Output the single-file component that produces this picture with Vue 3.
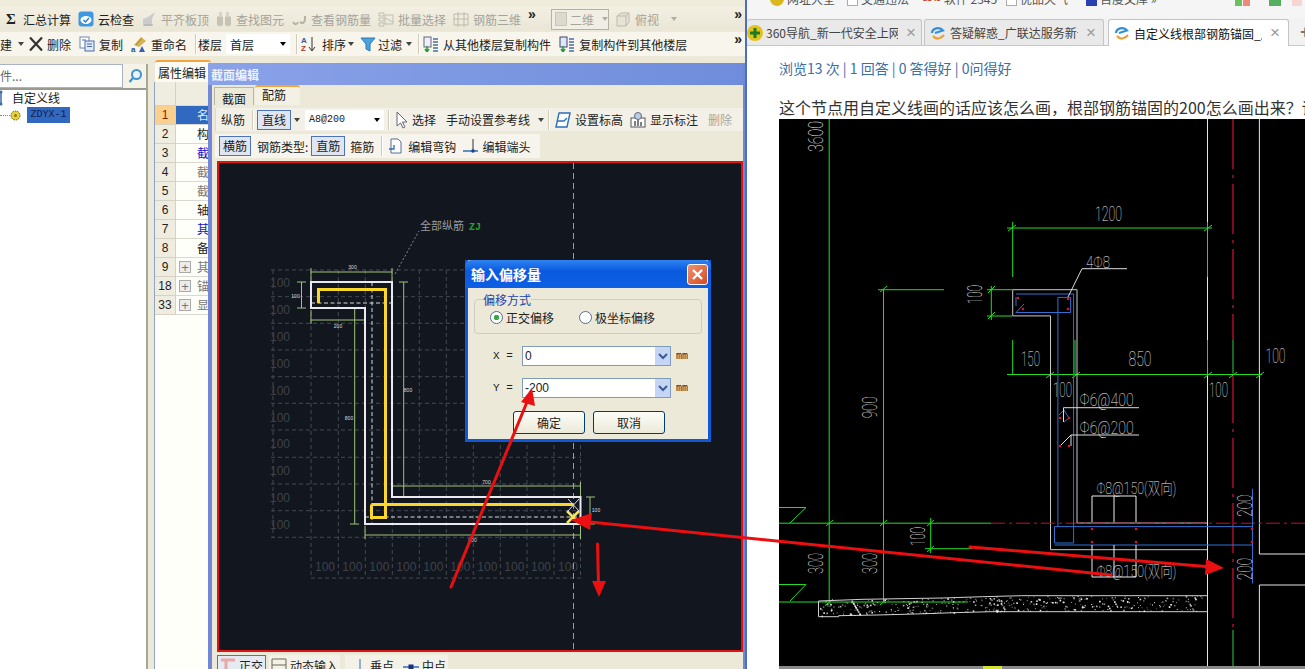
<script setup>
const tableRows = [
  { n: 1, t: '名', cls: 'sel' },
  { n: 2, t: '构', cls: '' },
  { n: 3, t: '截', cls: 'link' },
  { n: 4, t: '截', cls: 'dim' },
  { n: 5, t: '截', cls: 'dim' },
  { n: 6, t: '轴', cls: '' },
  { n: 7, t: '其', cls: 'link' },
  { n: 8, t: '备', cls: '' },
  { n: 9, t: '其', cls: 'dim', plus: true },
  { n: 18, t: '锚', cls: 'dim', plus: true },
  { n: 33, t: '显', cls: 'dim', plus: true }
]

// section canvas grid
const gridX = [310, 337.3, 364.3, 391.3, 418.3, 445.3, 472.3, 499.3, 526, 553, 579.5]
const gridY = [270, 296.7, 323.3, 350, 376.7, 403.3, 430, 457.3, 484, 510.7, 537.3]
const sideLabels = [287, 314, 341, 368, 395, 422, 448, 475, 502, 529]
const bottomLabels = gridX.slice(0, 10)

const dims = [
  { d: 'M310 272H391M310 268V284M391 268V284', },
  { d: 'M300.5 282V308M296 282H305M296 308H305' },
  { d: 'M310 320H364M310 310V324M364 308V324' },
  { d: 'M353.7 308V524M349 308H358M349 524H358' },
  { d: 'M402.7 282V497M398 282H407M398 497H407' },
  { d: 'M391 486H579.5M391 482V497M579.5 482V497' },
  { d: 'M589 497V524M585 497H594M585 524H594' },
  { d: 'M364 535H579.5M364 526V539M579.5 526V539' }
]
const dimLabels = [
  { x: 351.5, y: 268.5, t: '300' },
  { x: 294.5, y: 298, t: '100' },
  { x: 337, y: 327.5, t: '200' },
  { x: 407, y: 392, t: '800' },
  { x: 348, y: 419.5, t: '800' },
  { x: 485.5, y: 483.5, t: '700' },
  { x: 595, y: 512, t: '100' },
  { x: 471.5, y: 542, t: '800' }
]

// notes on the right hand drawing, x / y is the text baseline start
const notes = [
  { x: 1095, y: 220.5, t: '1200', len: 27 },
  { x: 1086, y: 268, t: '4Φ8', len: 24, fs: 17 },
  { x: 1021, y: 366, t: '150', len: 19 },
  { x: 1128.5, y: 366, t: '850', len: 23 },
  { x: 1265.5, y: 363, t: '100', len: 20 },
  { x: 1053, y: 397, t: '100', len: 19 },
  { x: 1209, y: 397, t: '100', len: 19 },
  { x: 1079.6, y: 406, t: 'Φ6@400', len: 54, fs: 18 },
  { x: 1079.6, y: 434, t: 'Φ6@200', len: 54, fs: 18 },
  { x: 1096.4, y: 494, t: 'Φ8@150(双向)', len: 80, fs: 16 },
  { x: 1096.4, y: 577, t: 'Φ8@150(双向)', len: 80, fs: 16 },
  { x: 982, y: 304, t: '100', len: 19, rot: true },
  { x: 823, y: 152, t: '3600', len: 31, rot: true },
  { x: 877, y: 418.3, t: '900', len: 22, rot: true },
  { x: 823, y: 574, t: '300', len: 21, rot: true },
  { x: 877, y: 574, t: '300', len: 21, rot: true },
  { x: 925.3, y: 546, t: '100', len: 19, rot: true },
  { x: 1252, y: 516.7, t: '200', len: 22, rot: true },
  { x: 1252, y: 580, t: '200', len: 22, rot: true }
]

const rebarDots = [
  [1018, 298], [1023, 309], [1068, 299], [1068, 309], [1060, 418], [1069, 418],
  [1060, 446], [1069, 446], [1092, 529], [1136, 529], [1092, 542], [1136, 542],
  [1252, 529], [1252, 542]
]

// speckle of the concrete strip, fixed seed so it stays the same
const speckle = []
let seed = 7
for (let i = 0; i < 420; i++) {
  seed = (seed * 9301 + 49297) % 233280
  const x = 820 + (seed / 233280) * 385
  seed = (seed * 9301 + 49297) % 233280
  const top = x < 1020 ? 601 - (x - 820) * 0.025 : 596
  const y = top + (seed / 233280) * 15
  speckle.push({ x: x.toFixed(1), y: y.toFixed(1), o: 0.4 + (i % 5) * 0.14, s: i % 3 === 0 ? 1.6 : 1 })
}
</script>

<template>
  <div class="screen">
    <div class="cad-app">
      <div class="top-gap"></div>

      <div class="toolbar row-one">
        <span class="tool"><span class="ico sigma">Σ</span>汇总计算</span>
        <span class="tool">
          <svg class="ico" viewBox="0 0 16 16"><rect x="0.5" y="0.5" width="15" height="15" rx="3" fill="#3f97dd"/><ellipse cx="8" cy="9" rx="5.5" ry="4" fill="#fff"/><path d="M5.5 9l2 2 3.5-4" fill="none" stroke="#2f7fc8" stroke-width="1.5"/></svg>云检查
        </span>
        <span class="tool off">
          <svg class="ico" viewBox="0 0 16 16"><path d="M2 15V8l5-2 7-5-3 7v7z" fill="#ccc"/><path d="M3 14h9" stroke="#aaa"/></svg>平齐板顶
        </span>
        <span class="tool off">
          <svg class="ico" viewBox="0 0 16 16"><rect x="1" y="5" width="6" height="10" rx="2" fill="#c6c3b4"/><rect x="9" y="5" width="6" height="10" rx="2" fill="#c6c3b4"/><rect x="3" y="1" width="3" height="5" fill="#d8d5c8"/><rect x="10" y="1" width="3" height="5" fill="#d8d5c8"/></svg>查找图元
        </span>
        <span class="tool off">
          <svg class="ico" viewBox="0 0 16 16"><path d="M2 11c2 3 4 3 5 0M9 11c2 2 5 1 5-3V5" fill="none" stroke="#b5b2a4" stroke-width="2"/></svg>查看钢筋量
        </span>
        <span class="tool off">
          <svg class="ico" viewBox="0 0 16 16"><path d="M1 2h5v3H1zM1 7h5v3H1zM1 12h5v3H1zM7 4h8v9H7z" fill="none" stroke="#c2bfb0"/><path d="M7 7l8 4" stroke="#c2bfb0"/></svg>批量选择
        </span>
        <span class="tool off">
          <svg class="ico" viewBox="0 0 16 16"><path d="M1 3h14v11H1zM5 1v15M11 1v15M1 8h14" fill="none" stroke="#bdbaab"/></svg>钢筋三维
        </span>
        <span class="more">»</span>
        <span class="view-box"><span class="view-swatch"></span>二维<span class="caret off-caret"></span></span>
        <span class="tool off view-tool">
          <svg class="ico" viewBox="0 0 16 16"><path d="M2 5l4-3h8v9l-3 4H2zM2 5h9v10M11 5l3-3" fill="#e6e3d6" stroke="#bdbaab"/></svg>俯视<span class="caret off-caret"></span>
        </span>
        <span class="more end">»</span>
      </div>

      <div class="toolbar row-two">
        <span class="tool cut">建<span class="caret"></span></span>
        <span class="tool delete">
          <svg class="ico" viewBox="0 0 16 16"><path d="M2 1.5l12 13M14 1.5l-12 13" stroke="#333" stroke-width="2.2"/></svg>删除
        </span>
        <span class="tool">
          <svg class="ico" viewBox="0 0 16 16"><rect x="1" y="1" width="9" height="11" fill="#fff" stroke="#6d89b5"/><rect x="6" y="5" width="9" height="10" fill="#dfe9f7" stroke="#4a6fa8"/><path d="M8 8h5M8 10.500h5M3 4h4" stroke="#4a6fa8"/></svg>复制
        </span>
        <span class="tool">
          <svg class="ico" viewBox="0 0 16 16"><path d="M3 9l7-8 5 4-7 6z" fill="#d8b24a"/><path d="M5 9l6-7" stroke="#8e8a60"/><text x="0" y="16" class="az">a</text><path d="M8 16l3-6 3 6z" fill="#3a5fb0"/></svg>重命名
        </span>
        <span class="sep"></span>
        <span class="plain floor">楼层</span>
        <span class="combo floor-combo">首层<span class="caret dark"></span></span>
        <span class="sep pull"></span>
        <span class="tool sort">
          <svg class="ico" viewBox="0 0 16 16"><text x="1" y="7" class="az blue">A</text><text x="1" y="15" class="az red">Z</text><path d="M12 1v13M9 11l3 4 3-4" fill="none" stroke="#333"/></svg>排序<span class="caret"></span>
        </span>
        <span class="tool filter">
          <svg class="ico" viewBox="0 0 16 16"><path d="M1 2h14l-5 6v7l-4-2V8z" fill="#4aa3df" stroke="#2c78b4"/></svg>过滤<span class="caret"></span>
        </span>
        <span class="sep pull"></span>
        <span class="tool from-floor">
          <svg class="ico" viewBox="0 0 16 16"><rect x="1" y="1" width="7" height="10" fill="#eef" stroke="#667"/><path d="M10 3h5M10 6h5M10 9h5M10 12h5M10 15h5" stroke="#4a6fa8" stroke-width="1.400"/><path d="M4 10v6M2 13l2 3 2-3" stroke="#2a9a3c" fill="none" stroke-width="1.500"/></svg>从其他楼层复制构件
        </span>
        <span class="tool">
          <svg class="ico" viewBox="0 0 16 16"><rect x="1" y="1" width="7" height="10" fill="#dfe6ff" stroke="#446"/><path d="M10 3h5M10 6h5M10 9h5M10 12h5M10 15h5" stroke="#4a6fa8" stroke-width="1.400"/><path d="M4 10v6M2 13l2 3 2-3" stroke="#2a9a3c" fill="none" stroke-width="1.500"/></svg>复制构件到其他楼层
        </span>
        <span class="more end">»</span>
      </div>

      <div class="work">
        <aside class="sidebar">
          <div class="search">
            <span class="search-input">构件...</span>
            <span class="search-btn">
              <svg width="16" height="16" viewBox="0 0 16 16"><circle cx="9.500" cy="6.500" r="4.500" fill="#e8f3fb" stroke="#3f93d3" stroke-width="2"/><path d="M6 10l-3.500 4" stroke="#3f93d3" stroke-width="2.200"/></svg>
            </span>
          </div>
          <div class="tree">
            <div class="tree-node">
              <svg width="5" height="16" viewBox="0 0 5 16"><path d="M1 1v14" stroke="#3a6da8" stroke-width="1.500"/><circle cx="1" cy="2" r="1.500" fill="#3a6da8"/><circle cx="1" cy="14" r="1.500" fill="#3a6da8"/></svg>
              <span class="node-label">自定义线</span>
            </div>
            <div class="tree-node leaf">
              <span class="tree-dots"></span>
              <svg width="11" height="11" viewBox="0 0 11 11"><circle cx="5.500" cy="5.500" r="4.500" fill="#e8d23a" stroke="#5a5a10" stroke-dasharray="1.500 1"/><circle cx="5.500" cy="5.500" r="1.500" fill="#8a7d10"/></svg>
              <span class="leaf-label">ZDYX-1</span>
            </div>
          </div>
        </aside>
        <section class="props">
          <div class="props-tab">属性编辑</div>
          <div class="props-table">
            <div class="props-head"><span class="num-cell"></span><span class="name-cell"></span></div>
            <div v-for="row in tableRows" :key="row.n" class="props-row">
              <span class="num-cell" :class="{ active: row.n === 1 }">{{ row.n }}</span>
              <span class="name-cell" :class="row.cls">
                <span v-if="row.plus" class="plus">+</span>
                <span class="name-text">{{ row.t }}</span>
              </span>
            </div>
          </div>
        </section>
      </div>

      <!-- floating section editor -->
      <div class="section-window">
        <div class="title-bar">截面编辑</div>
        <div class="window-body">
          <div class="tabs">
            <span class="tab">截面</span>
            <span class="tab on">配筋</span>
          </div>
          <div class="edit-bar bar-top">
            <span class="t-label w24">纵筋</span>
            <span class="sep s8"></span>
            <span class="pressed line-btn">直线</span>
            <span class="caret c5"></span>
            <span class="combo bar-combo">A8@200<span class="caret dark"></span></span>
            <span class="sep"></span>
            <svg class="cursor" width="12" height="18" viewBox="0 0 12 18"><path d="M1 1v14l3.500-3 2.500 5 2-1-2.500-5H11z" fill="#fff" stroke="#667"/></svg>
            <span class="t-label ml4">选择</span>
            <span class="t-label ml10">手动设置参考线</span>
            <span class="caret c11"></span>
            <span class="sep"></span>
            <svg class="ico ml6" viewBox="0 0 16 16"><path d="M4 1h11l-3 14H1z" fill="#fff" stroke="#2a6fb8" stroke-width="1.400"/><path d="M3 9h6l3-3" fill="none" stroke="#2a6fb8" stroke-width="1.400"/></svg>
            <span class="t-label ml4">设置标高</span>
            <svg class="ico ml7" viewBox="0 0 16 16"><rect x="1" y="6" width="14" height="9" fill="#fff" stroke="#555"/><circle cx="8" cy="4" r="3.500" fill="#b8cfe8" stroke="#667"/><path d="M5 14V9M8 14V8M11 14v-4" stroke="#555" stroke-width="1.500"/></svg>
            <span class="t-label ml4">显示标注</span>
            <span class="t-label off-text ml10">删除</span>
          </div>
          <div class="edit-bar bar-second">
            <span class="pressed cross-btn">横筋</span>
            <span class="t-label ml6">钢筋类型:</span>
            <span class="pressed straight-btn">直筋</span>
            <span class="t-label ml5">箍筋</span>
            <span class="sep s7"></span>
            <svg class="ico ml6" viewBox="0 0 16 16"><path d="M3 1h7l3 3v11H3z" fill="#fff" stroke="#55708f"/><path d="M1 11h5V7" fill="none" stroke="#2a6fb8" stroke-width="1.300"/></svg>
            <span class="t-label ml4">编辑弯钩</span>
            <svg class="ico ml6" viewBox="0 0 16 16"><path d="M1 13h15" stroke="#2a6fb8" stroke-width="1.500"/><path d="M11 1v12" stroke="#333"/><circle cx="11" cy="13" r="1.800" fill="#1f3f90"/></svg>
            <span class="t-label ml4">编辑端头</span>
          </div>
          <div class="section-canvas">
            <svg class="canvas-svg" viewBox="218 163 522 487" width="522" height="487">
              <g stroke="#45494f" stroke-width="1" stroke-dasharray="4 3" fill="none">
                <path v-for="x in gridX" :key="'gx' + x" :d="`M${x} 270V578`"/>
                <path v-for="y in gridY" :key="'gy' + y" :d="`M270 ${y}H580`"/>
                <path d="M310 578H580M272 270V538"/>
              </g>
              <g class="grid-text">
                <text v-for="y in sideLabels" :key="'sl' + y" x="269" :y="y">100</text>
                <text v-for="x in bottomLabels" :key="'bl' + x" :x="x + 4" y="571">100</text>
              </g>
              <path d="M572.500 163V650" stroke="#9a9c9c" stroke-dasharray="6 4" fill="none"/>

              <path d="M394 274L418 231" stroke="#888a8a" stroke-dasharray="2 2" fill="none"/>
              <text x="419" y="230" class="small-note">全部纵筋</text>
              <text x="468" y="230" class="zj">ZJ</text>

              <g stroke="#9fc27a" stroke-width="1" fill="none">
                <path v-for="(dim, i) in dims" :key="i" :d="dim.d"/>
              </g>
              <text v-for="l in dimLabels" :key="l.x + l.t" :x="l.x" :y="l.y" class="tiny">{{ l.t }}</text>

              <g stroke="#d8d8d8" stroke-dasharray="4 2.500" fill="none">
                <path d="M310 303H391M371 282V524M364 517H579"/>
              </g>
              <path d="M310 282H391V497H579.500V524H364V308H310Z" fill="none" stroke="#eaeaf0" stroke-width="2"/>
              <path d="M317.500 303V289.500H384.500V504.500H572M370.500 504.500H384.500" fill="none" stroke="#fbd62c" stroke-width="3"/>
              <path d="M370.500 504.500V517.500H384.500V504.500" fill="none" stroke="#fbd62c" stroke-width="3"/>
              <path d="M566 511L578 523M578 511L566 523" stroke="#f5e463" stroke-width="2.500"/>
              <path d="M567 499L578 511M578 499L567 511" stroke="#dddddd" stroke-width="1"/>
            </svg>
          </div>
          <div class="status-bar">
            <span class="status-btn ortho">
              <svg class="ico" viewBox="0 0 16 16"><path d="M1 2h14M6 2v13" stroke="#e8a8a8" stroke-width="3"/></svg>正交
            </span>
            <span class="status-btn">
              <svg class="ico" viewBox="0 0 16 16"><path d="M1 1h14v14H1zM1 7h14" fill="none" stroke="#6b6b50"/></svg>动态输入
            </span>
            <span class="status-btn group">
              <svg class="ico" viewBox="0 0 16 16"><path d="M1 15h14" stroke="#2a6fb8" stroke-width="1.500"/><path d="M9 1v14" stroke="#2a6fb8"/></svg>垂点
              <svg class="ico ml6" viewBox="0 0 16 16"><path d="M0 9h16" stroke="#2a6fb8" stroke-width="1.500"/><rect x="5.500" y="6.500" width="5" height="5" fill="#1a2f80"/></svg>中点
            </span>
          </div>
        </div>

        <!-- offset dialog -->
        <div class="offset-dialog">
          <div class="dlg-title">
            <span>输入偏移量</span>
            <span class="dlg-close">
              <svg width="13" height="13" viewBox="0 0 13 13"><path d="M2 2l9 9M11 2l-9 9" stroke="#fff" stroke-width="2.400"/></svg>
            </span>
          </div>
          <div class="dlg-body">
            <fieldset class="dlg-group">
              <legend>偏移方式</legend>
              <label class="radio"><span class="dot on"></span>正交偏移</label>
              <label class="radio"><span class="dot"></span>极坐标偏移</label>
            </fieldset>
            <div class="field">
              <span class="field-name">X =</span>
              <span class="field-input">0<span class="field-drop"><svg width="10" height="7" viewBox="0 0 10 7"><path d="M1 1l4 4 4-4" fill="none" stroke="#3c5a92" stroke-width="2"/></svg></span></span>
              <span class="field-unit">mm</span>
            </div>
            <div class="field">
              <span class="field-name">Y =</span>
              <span class="field-input">-200<span class="field-drop"><svg width="10" height="7" viewBox="0 0 10 7"><path d="M1 1l4 4 4-4" fill="none" stroke="#3c5a92" stroke-width="2"/></svg></span></span>
              <span class="field-unit">mm</span>
            </div>
            <div class="dlg-actions">
              <span class="dlg-btn">确定</span>
              <span class="dlg-btn">取消</span>
            </div>
          </div>
        </div>
      </div>
    </div>

    <div class="browser">
      <div class="bookmarks">
        <span class="mark m-a"><svg width="14" height="14" viewBox="0 0 14 14"><circle cx="7" cy="7" r="7" fill="#d8b81c"/></svg>网址大全</span>
        <span class="mark m-b"><span class="box-ico"></span>交通违法</span>
        <span class="mark m-c"><span class="num-ico">2345</span>软件 2345</span>
        <span class="mark m-d"><span class="box-ico"></span>优品天气</span>
        <span class="mark m-e"><span class="box-ico paw"></span>百度文库 »</span>
        <span class="mark-icons"><i class="g"></i><i class="r"></i><i class="g2"></i><i class="r2"></i></span>
      </div>
      <div class="tab-strip">
        <div class="b-tab t1">
          <svg class="favicon" width="16" height="16" viewBox="0 0 16 16"><circle cx="8" cy="8" r="8" fill="#e3c21b"/><path d="M8 3v10M3 8h10" stroke="#1f7a22" stroke-width="3"/></svg>
          <span class="b-title">360导航_新一代安全上网</span>
          <span class="b-close">×</span>
        </div>
        <div class="b-tab">
          <svg class="favicon" width="18" height="16" viewBox="0 0 16 16"><path d="M2 8a6 5 0 0 1 11-2.500L5 8" fill="none" stroke="#2f8fd8" stroke-width="2.200"/><path d="M3 11c3 4 8 3 11-1" fill="none" stroke="#e8a33a" stroke-width="2.200"/></svg>
          <span class="b-title">答疑解惑_广联达服务新干线</span>
          <span class="b-close">×</span>
        </div>
        <div class="b-tab current">
          <svg class="favicon" width="18" height="16" viewBox="0 0 16 16"><path d="M2 8a6 5 0 0 1 11-2.500L5 8" fill="none" stroke="#2f8fd8" stroke-width="2.200"/><path d="M3 11c3 4 8 3 11-1" fill="none" stroke="#e8a33a" stroke-width="2.200"/></svg>
          <span class="b-title">自定义线根部钢筋锚固_广联达</span>
          <span class="b-close">×</span>
        </div>
        <span class="new-tab">+</span>
      </div>
      <div class="page">
        <p class="stats">浏览13 次 | 1 回答 | 0 答得好 | 0问得好</p>
        <p class="question">这个节点用自定义线画的话应该怎么画，根部钢筋锚固的200怎么画出来？请</p>
        <div class="drawing">
          <svg viewBox="779 119 526 550" width="526" height="550">
            <rect x="779" y="119" width="526" height="550" fill="#000"/>
            <!-- axis and wall lines -->
            <path d="M1207.500 119V666M1259.400 119V554M1259.400 585V666M1259.400 554H1305M1259.400 585H1305" stroke="#e6e6e6" fill="none"/>
            <path d="M1233 119V340M1233 373V630" stroke="#c8102e" stroke-width="1.300" stroke-dasharray="50 6 3 6" fill="none"/>
            <path d="M1233 630V666M1233 340V373" stroke="#1fa32a" stroke-width="1.300" fill="none"/>
            <g stroke="#22dd22" fill="none">
              <path d="M829.200 119V602M883.500 289V602"/>
              <path d="M1007 228H1212M1012.700 222V277M1207.500 222V277M1012.700 340V374M1075 340V374M1207.500 340V374"/>
              <path d="M1007 374.500H1262M878 289.700H944M987 289.700H1012M987 316H1012M991.300 286V320"/>
              <path d="M779 523.200H991M925 548.700H972M930.700 518V553M779 602H968"/>
              <path d="M779 507.500H806L790 523M779 584.500H806L790 601"/>
            </g>
            <g stroke="#22dd22" fill="none">
              <path d="M1008 231l8-6M1204 231l8-6M826 526l7-6M880 526l7-6M927 526l7-6M927 552l7-6M826 605l7-6M880 605l7-6M1046 378l8-6M1072 378l8-6M1204 378l8-6M1229 378l8-6M1256 378l8-6M988 293l7-7M988 319l7-7M880 292l7-6"/>
            </g>
            <path d="M1012.700 315.900V289.700H1077V523H1207M1012.700 315.900H1050.500V549.700H1207" fill="none" stroke="#c8c8c8"/>
            <path d="M991 523.200H1305" stroke="#c8102e" stroke-dasharray="14 4 3 4" fill="none"/>
            <g stroke="#2f70d0" fill="none">
              <path d="M1016 294H1073.600V543H1054.500V526.600H1252M1054.500 545H1252M1057.900 526V297.400H1070.600V312.500H1016M1016 312.500L1024 304M1252.500 488.700V583.500"/>
              <path d="M1016 297V306M1059 415l5-5 5 8-5 4"/>
            </g>
            <path d="M1092 496V522M1114 496V522M1136 496V522M1092 496H1136M1092 545V577M1114 545V577M1136 545V577M1092 577H1136" stroke="#eee" fill="none"/>
            <path d="M1082 268.700H1127M1082 268.700L1068 297M1063.500 407.700H1139M1063.500 407.700V422M1071 435H1139M1071 435L1060 446M1071 435V446" stroke="#ddd" fill="none"/>
            <circle v-for="(p, i) in rebarDots" :key="i" :cx="p[0]" :cy="p[1]" r="1.300" fill="#e01030"/>
            <!-- concrete strip -->
            <path d="M818.500 601L863 599.300L942.400 598L982.600 596.700L1021.700 595.700H1207.500M818.500 601V616.700H838.600V615.700L877 615L915.600 614L954 612.700L991 611.700H1207.500" fill="none" stroke="#d0d0d0"/>
            <rect v-for="(s, i) in speckle" :key="i" :x="s.x" :y="s.y" :width="s.s" :height="s.s" fill="#fff" :opacity="s.o"/>
            <g class="cad-text">
              <text v-for="n in notes" :key="n.t + n.x + n.y"
                :x="n.x" :y="n.y"
                :textLength="n.len" lengthAdjust="spacingAndGlyphs"
                :font-size="n.fs || 20"
                :transform="n.rot ? `rotate(-90 ${n.x} ${n.y})` : null">{{ n.t }}</text>
            </g>
            <path d="M779 667.500H1305" stroke="#8a8a8a" stroke-width="3"/>
            <path d="M983 667.500H1002" stroke="#d8e030" stroke-width="3"/>
          </svg>
        </div>
      </div>
    </div>

    <!-- red markup drawn over the screenshot -->
    <svg class="markup" width="1305" height="669" viewBox="0 0 1305 669">
      <g stroke="#ea0f10" stroke-width="3" fill="#ea0f10" stroke-linecap="round">
        <path d="M1111 575L590 522"/>
        <path d="M970 547L1206 566.500"/>
        <path d="M451 587L527 402"/>
        <path d="M597.500 544L598.500 584"/>
      </g>
      <g fill="#ea0f10">
        <polygon points="571,520 592,513 590,530"/>
        <polygon points="1224,568 1206,559 1205,575"/>
        <polygon points="532,388 521,402 535,406"/>
        <polygon points="599,597 592,581 606,581"/>
      </g>
    </svg>
  </div>
</template>

<style>
html, body { margin: 0; background: #fff; overflow: hidden; }
</style>

<style scoped>
.screen {
  position: relative;
  display: flex;
  width: 1305px;
  height: 669px;
  overflow: hidden;
  font-family: "Noto Sans CJK SC", "Liberation Sans", sans-serif;
  font-size: 12px;
  color: #222;
}

/* left application */
.cad-app {
  position: relative;
  display: flex;
  flex-direction: column;
  flex: none;
  width: 745px;
  background: #ece9d8;
}
.top-gap { height: 7px; background: #efecdc; }
.toolbar {
  display: flex;
  align-items: center;
  flex: none;
  white-space: nowrap;
}
.row-one {
  height: 24px;
  margin-bottom: 1px;
  gap: 7px;
  padding-left: 3px;
  background: linear-gradient(#f3f0e3, #e9e6d6);
}
.row-two {
  height: 24px;
  gap: 8px;
  background: #f7f5ec;
  border-bottom: 2px solid #ece9d8;
}
.tool { display: inline-flex; align-items: center; gap: 4px; flex: none; }
.off { color: #a5a39a; }
.ico { width: 16px; height: 16px; flex: none; }
.sigma { font-family: "Liberation Serif", serif; font-weight: 700; font-size: 15px; text-align: center; line-height: 16px; }
.more { font-family: "Liberation Sans", sans-serif; font-weight: 700; font-size: 14px; line-height: 10px; position: relative; top: -5px; }
.end { margin-left: auto; margin-right: 3px; }
.view-box {
  display: inline-flex;
  align-items: center;
  width: 58px;
  height: 21px;
  margin-left: 8px;
  border: 1px solid #b5b2a4;
  color: #a5a39a;
  box-sizing: border-box;
  padding-left: 3px;
  background: #f1efe5;
}
.view-swatch { width: 14px; height: 12px; margin-right: 3px; background: #dcdacd; border: 1px solid #c8c6b8; }
.view-tool { margin-left: -1px; }
.caret {
  display: inline-block;
  width: 0;
  height: 0;
  border: 3px solid transparent;
  border-top: 4px solid #444;
  border-bottom: 0;
  margin-left: 4px;
  flex: none;
}
.off-caret { border-top-color: #b0aea4; margin-left: 8px; }
.cut { gap: 2px; }
.delete { margin-left: -4px; gap: 3px; }
.sep { display: inline-block; flex: none; width: 1px; height: 20px; background: #cfccbb; box-shadow: 1px 0 #fff; }
.pull { margin-left: -2px; }
.floor { margin-left: -6px; }
.combo {
  display: inline-flex;
  align-items: center;
  justify-content: space-between;
  box-sizing: border-box;
  background: #fff;
  padding: 0 4px;
}
.floor-combo { width: 64px; height: 20px; margin-left: -4px; font-size: 12px; }
.dark { border-top-color: #000; margin: 0; }
.sort { margin-left: -5px; gap: 6px; }
.sort .caret { margin-left: -4px; }
.filter { margin-left: -2px; gap: 2px; }
.filter .caret { margin-left: 2px; }
.from-floor { margin-left: -4px; }
.az { font-family: "Liberation Sans", sans-serif; font-size: 8px; font-weight: 700; fill: #2a4f90; }
.blue { fill: #2a5fb0; }
.red { fill: #b03030; }

.work { flex: 1; display: flex; min-height: 0; }
.sidebar {
  flex: none;
  width: 148px;
  box-sizing: border-box;
  background: #fff;
  border-right: 2px solid #a5a896;
  margin-top: 6px;
}
.search { display: flex; height: 24px; border-bottom: 2px solid #9a9a8e; background: #f5f3e8; box-sizing: content-box; }
.search-input {
  width: 123px;
  box-sizing: border-box;
  background: #fff;
  border: 1px solid #a8b4c4;
  border-left: 0;
  text-indent: -12px;
  overflow: hidden;
  line-height: 22px;
  color: #666;
}
.search-btn { flex: 1; display: flex; align-items: center; justify-content: center; }
.tree-node { display: flex; align-items: center; height: 16px; }
.node-label { margin-left: 7px; line-height: 16px; }
.leaf { margin-top: 1px; }
.tree-dots { width: 10px; border-top: 1px dotted #888; }
.leaf-label {
  margin-left: 6px;
  width: 43px;
  height: 16px;
  line-height: 16px;
  text-align: center;
  background: #3168c0;
  color: #11204a;
  font-family: "Liberation Mono", monospace;
  font-size: 10px;
}
.props {
  flex: 1;
  padding: 2px 0 0 6px;
  background: #ece9d8;
  display: flex;
  flex-direction: column;
  min-width: 0;
}
.props-tab {
  flex: none;
  width: 56px;
  height: 22px;
  margin-left: 1px;
  padding-left: 3px;
  box-sizing: border-box;
  line-height: 21px;
  background: #fbfaf3;
  border-top: 2px solid #f0a63a;
  border-radius: 3px 3px 0 0;
  white-space: nowrap;
  overflow: hidden;
}
.props-table {
  flex: 1;
  background: #fffff9;
  border-left: 1px solid #8fa4c8;
}
.props-head { display: flex; height: 24px; background: #efece0; }
.props-head .name-cell { background: #efece0; }
.props-row { display: flex; height: 19px; }
.num-cell {
  flex: none;
  width: 21px;
  box-sizing: border-box;
  text-align: center;
  line-height: 18px;
  background: #efece0;
  border-bottom: 1px solid #d5d2c4;
  border-right: 1px solid #d5d2c4;
  font-family: "Liberation Sans", sans-serif;
}
.num-cell.active { background: #fbcf8c; color: #7a2a10; }
.name-cell {
  flex: 1;
  position: relative;
  box-sizing: border-box;
  line-height: 18px;
  border-bottom: 1px solid #d9d9d0;
}
.name-text { position: absolute; left: 21px; }
.plus {
  position: absolute;
  left: 3px;
  top: 3px;
  width: 12px;
  height: 12px;
  line-height: 11px;
  text-align: center;
  background: #ececec;
  border: 1px solid #aaa;
  box-sizing: border-box;
  font-family: "Liberation Sans", sans-serif;
  font-size: 13px;
}
.sel { background: #3168c0; color: #dfe8f8; }
.link { color: #1111cc; }
.dim { color: #777; }

/* section editor window */
.section-window {
  position: absolute;
  left: 208px;
  top: 63px;
  right: 0;
  bottom: 0;
  display: flex;
  flex-direction: column;
  background: #ece9d8;
  border-left: 4px solid #7287d6;
  border-right: 2px solid #7287d6;
  box-sizing: border-box;
}
.title-bar {
  flex: none;
  height: 22px;
  margin-left: -4px;
  padding-left: 3px;
  line-height: 24px;
  font-weight: 700;
  color: #eef2ff;
  background: linear-gradient(90deg, #8aa2e8, #6f8ddc);
}
.window-body { flex: 1; display: flex; flex-direction: column; min-height: 0; padding: 0 0 0 3px; }
.tabs { display: flex; flex: none; height: 20px; margin-left: -1px; gap: 1px; }
.tab {
  width: 40px;
  box-sizing: border-box;
  text-align: center;
  line-height: 21px;
  border: 1px solid #b8b5a6;
  border-bottom: 0;
  margin-top: 2px;
}
.tab.on {
  width: 45px;
  margin-top: 0;
  padding-left: 7px;
  text-align: left;
  line-height: 16px;
  background: #f3f1e6;
  border: 0;
  border-top: 2px solid #f0a63a;
  border-radius: 3px 3px 0 0;
}
.edit-bar { display: flex; align-items: center; flex: none; white-space: nowrap; }
.bar-top {
  height: 23px;
  margin-top: 3px;
  padding-left: 5px;
  background: #f3f1e7;
  border-left: 1px solid #dcd9c9;
}
.bar-second {
  height: 24px;
  width: 325px;
  margin-top: 3px;
  padding-left: 4px;
  box-sizing: border-box;
  background: #f6f4ec;
}
.t-label { flex: none; }
.off-text { color: #aaa79b; }
.w24 { width: 24px; }
.s8 { margin: 0 4px 0 7px; }
.s7 { margin-left: 7px; }
.pressed {
  flex: none;
  box-sizing: border-box;
  height: 20px;
  line-height: 18px;
  text-align: center;
  background: #dfe6f2;
  border: 1px solid #4e74b8;
}
.line-btn { width: 34px; }
.cross-btn { width: 32px; }
.straight-btn { width: 34px; margin-left: 3px; }
.c5 { margin-left: 3px; }
.c11 { margin-left: 8px; margin-right: 4px; }
.bar-combo { width: 79px; height: 20px; margin: 0 4px 0 5px; font-family: "Liberation Mono", monospace; font-size: 10px; }
.cursor { margin-left: 7px; flex: none; }
.ml4 { margin-left: 4px; }
.ml5 { margin-left: 5px; }
.ml6 { margin-left: 6px; }
.ml7 { margin-left: 7px; }
.ml10 { margin-left: 10px; }
.section-canvas {
  flex: none;
  width: 522px;
  height: 487px;
  margin: 3px 0 0 2px;
  border: 2px solid #e01216;
  background: #12161f;
}
.canvas-svg { display: block; }
.grid-text { font-family: "Liberation Sans", sans-serif; font-size: 12px; fill: #3e4249; }
.small-note { font-size: 11px; fill: #9a9c9c; }
.zj { font-family: "Liberation Mono", monospace; font-size: 10px; fill: #21a32a; font-weight: 700; }
.tiny { font-family: "Liberation Sans", sans-serif; font-size: 5px; fill: #ddd; text-anchor: middle; }
.status-bar { display: flex; flex: none; gap: 3px; margin: 3px 0 0 2px; height: 30px; }
.status-btn {
  display: inline-flex;
  align-items: flex-start;
  gap: 3px;
  padding: 3px 2px 0;
  background: #f4f2e8;
  line-height: 16px;
}
.ortho { border: 1px solid #4e74b8; background: #e6eaf2; padding-top: 2px; }
.group { margin-left: 2px; padding-left: 6px; }

/* offset dialog */
.offset-dialog {
  position: absolute;
  left: 253px;
  top: 197px;
  width: 246px;
  height: 182px;
  display: flex;
  flex-direction: column;
  box-sizing: border-box;
  border: 3px solid #0f58d8;
  border-top: 0;
  background: #ece9d8;
}
.dlg-title {
  display: flex;
  align-items: center;
  justify-content: space-between;
  flex: none;
  height: 28px;
  margin: 0 -3px;
  padding: 0 3px 0 6px;
  border-radius: 6px 6px 0 0;
  background: linear-gradient(#2f82f0, #0a5ae0 40%, #0d5fe4);
  color: #fff;
  font-size: 14px;
  font-weight: 700;
}
.dlg-close {
  display: flex;
  align-items: center;
  justify-content: center;
  width: 21px;
  height: 21px;
  border: 1px solid #fff;
  border-radius: 3px;
  box-sizing: border-box;
  background: linear-gradient(135deg, #ee9270, #d84a1e);
}
.dlg-body { flex: 1; display: flex; flex-direction: column; }
.dlg-group {
  display: flex;
  gap: 25px;
  height: 41px;
  box-sizing: border-box;
  margin: 5px 6px 0;
  padding: 0 0 0 15px;
  border: 1px solid #d0cdbc;
  border-radius: 4px;
  min-width: 0;
}
.dlg-group legend { padding: 0; margin-left: -7px; color: #1a46a8; line-height: 13px; }
.radio { display: flex; align-items: center; gap: 3px; height: 22px; }
.dot {
  width: 13px;
  height: 13px;
  box-sizing: border-box;
  border-radius: 50%;
  border: 1px solid #5a6f88;
  background: #fff;
}
.dot.on { background: radial-gradient(circle, #3aa84a 0 2.500px, #fff 3px); }
.field { display: flex; align-items: center; height: 20px; margin: 12px 0 0 25px; font-family: "Liberation Mono", monospace; font-size: 11px; }
.field + .field { margin-top: 12px; }
.field-name { width: 29px; }
.field-input {
  display: flex;
  align-items: center;
  justify-content: space-between;
  width: 149px;
  height: 20px;
  box-sizing: border-box;
  padding-left: 2px;
  background: #fff;
  border: 1px solid #7f9db9;
  font-family: "Liberation Sans", sans-serif;
  font-size: 12px;
}
.field-drop {
  display: flex;
  align-items: center;
  justify-content: center;
  width: 15px;
  height: 18px;
  background: #c5d5f5;
}
.field-unit { margin-left: 5px; font-size: 10px; color: #222; }
.dlg-actions { display: flex; gap: 8px; margin: 13px 0 0 45px; }
.dlg-btn {
  width: 72px;
  height: 23px;
  box-sizing: border-box;
  text-align: center;
  line-height: 21px;
  border: 1px solid #003c74;
  border-radius: 3px;
  background: linear-gradient(#fdfdf8, #ece9d8);
}

/* browser */
.browser {
  flex: none;
  width: 560px;
  display: flex;
  flex-direction: column;
  border-left: 2px solid #4a6fc0;
  box-sizing: border-box;
  background: #fff;
}
.bookmarks {
  position: relative;
  display: flex;
  flex: none;
  height: 18px;
  overflow: hidden;
  background: #f5f5f5;
  color: #555;
}
.mark { position: absolute; top: -10px; display: inline-flex; align-items: center; gap: 3px; line-height: 18px; white-space: nowrap; }
.m-a { left: 23px; }
.m-b { left: 100px; }
.m-c { left: 176px; }
.m-d { left: 259px; }
.m-e { left: 339px; }
.box-ico { width: 11px; height: 14px; background: #fff; border: 1px solid #aaa; box-sizing: border-box; }
.paw { border-color: #2a3fb0; background: #2a3fb0; }
.num-ico { font-family: "Liberation Sans", sans-serif; font-size: 8px; font-weight: 700; color: #c83a30; }
.mark-icons { position: absolute; left: 488px; top: 0; display: flex; gap: 1px; }
.mark-icons i { display: block; width: 7px; height: 6px; }
.mark-icons .g { background: #6cc060; }
.mark-icons .r { background: #ef8a78; }
.mark-icons .g2 { width: 12px; margin-left: 18px; background: #54b060; }
.mark-icons .r2 { width: 10px; margin-left: 10px; background: #f6d6d0; }
.tab-strip {
  display: flex;
  align-items: flex-end;
  flex: none;
  height: 27px;
  gap: 2px;
  background: #f2f2f2;
  border-bottom: 1px solid #c8c8c8;
}
.b-tab {
  display: flex;
  align-items: center;
  flex: none;
  width: 180px;
  height: 26px;
  box-sizing: border-box;
  padding-left: 4px;
  background: #e9e9e9;
  border: 1px solid #c4c4c4;
  border-bottom: 0;
  border-radius: 3px 3px 0 0;
  color: #444;
}
.t1 { width: 175px; padding-left: 0; border-left: 0; }
.current { width: 181px; margin-left: 2px; height: 27px; margin-bottom: -1px; background: #fff; color: #111; }
.favicon { flex: none; }
.b-title { width: 128px; margin-left: 3px; overflow: hidden; white-space: nowrap; }
.t1 .b-title { width: 132px; }
.current .b-title { width: 128px; margin-left: 3px; }
.b-close {
  margin-left: 8px;
  color: #9a9a9a;
  font-family: "Liberation Sans", sans-serif;
  font-size: 17px;
  line-height: 20px;
}
.new-tab { margin-left: 9px; color: #777; font: 700 18px/26px "Liberation Sans", sans-serif; }
.page { flex: 1; min-height: 0; padding-left: 32px; overflow: hidden; }
.stats { margin: 12px 0 0; height: 20px; line-height: 20px; font-size: 14px; color: #3a6ea5; white-space: nowrap; }
.question { margin: 20px 0 0; height: 19px; line-height: 19px; font-size: 16px; color: #333; white-space: nowrap; }
.drawing { height: 550px; margin-top: 2px; background: #000; }
.drawing svg { display: block; }
.cad-text { font-family: Roboto, "Liberation Sans", "Noto Sans CJK SC", sans-serif; font-weight: 100; fill: #ececec; }

.markup { position: absolute; left: 0; top: 0; pointer-events: none; }
</style>
